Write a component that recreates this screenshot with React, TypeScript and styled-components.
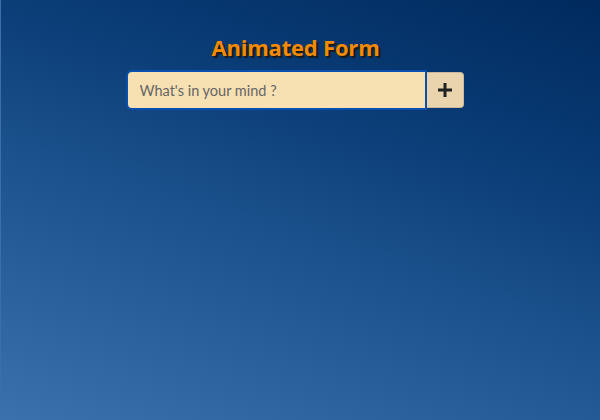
import React from "react";
import styled, { createGlobalStyle } from "styled-components";

const Global = createGlobalStyle`
  html, body { margin: 0; padding: 0; height: 100%; }
  body { font-family: "Open Sans", "Noto Sans", sans-serif; }
  #root { height: 100%; }
`;

const Page = styled.div`
  box-sizing: border-box;
  width: 600px;
  height: 420px;
  padding: 32px 10px 0 0;
  display: flex;
  flex-direction: column;
  align-items: center;
  background: linear-gradient(18deg, #3b72ad 0%, #1e5590 40%, #0a3c76 70%, #002a5e 100%);
  border-left: 1px solid #3d6ea8;
`;

const Title = styled.h1`
  margin: 0 0 10px;
  font-family: "Open Sans", sans-serif;
  font-size: 22px;
  font-weight: 700;
  line-height: 30px;
  color: #f58a00;
  text-shadow: 2px 2px 1px #1a1a1a;
  letter-spacing: -0.2px;
`;

const Form = styled.form`
  display: flex;
  width: 336px;
  height: 36px;
`;

const Input = styled.input`
  flex: 1;
  min-width: 0;
  box-sizing: border-box;
  border: none;
  outline: none;
  margin: 0;
  padding: 0 0 0 12px;
  background: #f7e0b2;
  border-radius: 4px 0 0 4px;
  font-family: "Lato", "Open Sans", sans-serif;
  font-size: 14.5px;
  color: #333;
  box-shadow: 0 0 0 2px #0b4fae;
  position: relative;
  z-index: 1;
  &::placeholder { color: #666; }
`;

const Button = styled.button`
  box-sizing: border-box;
  width: 39px;
  border: 1px solid #c9b99a;
  border-left: 2px solid #8fa8c8;
  margin: 0;
  padding: 0;
  background: #e9d4ae;
  border-radius: 0 4px 4px 0;
  display: flex;
  align-items: center;
  justify-content: center;
  cursor: pointer;
`;

export default function App() {
  return (
    <>
      <Global />
      <Page>
        <Title>Animated Form</Title>
        <Form onSubmit={(e) => e.preventDefault()}>
          <Input autoFocus placeholder="What's in your mind ?" />
          <Button type="submit" aria-label="add">
            <svg width="16" height="16" viewBox="0 0 16 16">
              <path d="M8 1v14M1 8h14" stroke="#222" strokeWidth="3" />
            </svg>
          </Button>
        </Form>
      </Page>
    </>
  );
}
